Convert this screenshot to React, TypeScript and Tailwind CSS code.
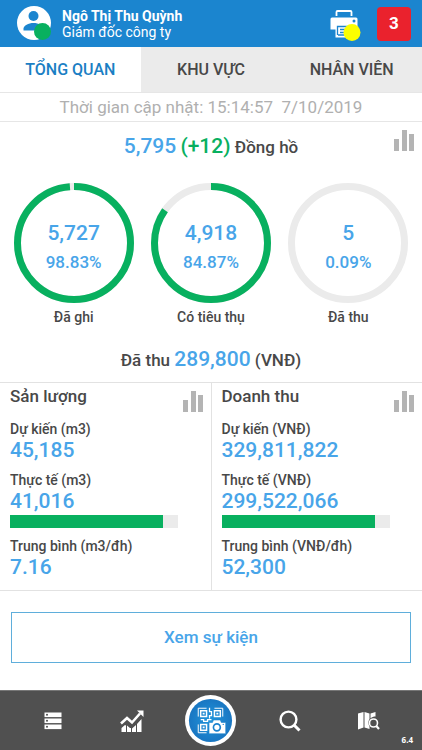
import type { ReactNode } from "react";

const rings = [
    { value: "5,727", percent: "98.83%", label: "Đã ghi", filled: 98.83 },
    { value: "4,918", percent: "84.87%", label: "Có tiêu thụ", filled: 84.87 },
    { value: "5", percent: "0.09%", label: "Đã thu", filled: 0 },
];

const panels = [
    { title: "Sản lượng", unit: "m3", planned: "45,185", actual: "41,016", average: "7.16", progress: 91 },
    { title: "Doanh thu", unit: "VNĐ", planned: "329,811,822", actual: "299,522,066", average: "52,300", progress: 91 },
];

function BarsIcon() {
    return (
        <svg width="21" height="21" viewBox="0 0 21 21" fill="#b4b4b4" aria-hidden="true">
            <rect x="0" y="9" width="5" height="12" />
            <rect x="8" y="0" width="5" height="21" />
            <rect x="15" y="4" width="5" height="17" />
        </svg>
    );
}

function ChartButton({ label }: { label: string }) {
    return (
        <button type="button" aria-label={label} className="block">
            <BarsIcon />
        </button>
    );
}

function Ring({ value, percent, label, filled }: (typeof rings)[number]) {
    return (
        <div className="flex flex-1 flex-col items-center">
            <div className="grid size-[120px] place-items-center">
                <svg viewBox="0 0 120 120" className="col-start-1 row-start-1 size-full" fill="none" strokeWidth="7" aria-hidden="true">
                    <circle cx="60" cy="60" r="56.500" stroke="#ebebeb" />
                    {filled > 0 && (
                        <circle
                            cx="60"
                            cy="60"
                            r="56.500"
                            stroke="#08b05f"
                            pathLength={100}
                            strokeDasharray={`${filled} 100`}
                            transform="rotate(-90 60 60)"
                        />
                    )}
                </svg>
                <div className="col-start-1 row-start-1 pt-2 text-center font-medium text-[#48a5e9]">
                    <div className="text-[21px] leading-7">{value}</div>
                    <div className="pt-px text-[17px] leading-7">{percent}</div>
                </div>
            </div>
            <div className="pt-1 text-sm leading-5 font-medium">{label}</div>
        </div>
    );
}

function Panel({ title, unit, planned, actual, average, progress }: (typeof panels)[number]) {
    return (
        <section className="flex-1 border-r border-[#e2e2e2] pb-3 pl-[10px] last:border-r-0">
            <div className="flex justify-between pr-[7px]">
                <h2 className="text-[17px] leading-[26px] font-medium">{title}</h2>
                <div className="pt-2">
                    <ChartButton label={`Biểu đồ ${title}`} />
                </div>
            </div>
            <dl className="pt-[7px] font-medium">
                <dt className="text-sm leading-5">Dự kiến ({unit})</dt>
                <dd className="text-[21px] leading-[22px] text-[#48a5e9]">{planned}</dd>
                <dt className="pt-[9px] text-sm leading-5">Thực tế ({unit})</dt>
                <dd className="text-[21px] leading-[22px] text-[#48a5e9]">
                    {actual}
                    <div className="mt-[3px] h-[13px] w-[84%] bg-[#ebebeb]">
                        <div className="h-full bg-[#08b05f]" style={{ width: `${progress}%` }} />
                    </div>
                </dd>
                <dt className="pt-2 text-sm leading-5">Trung bình ({unit}/đh)</dt>
                <dd className="text-[21px] leading-[22px] text-[#48a5e9]">{average}</dd>
            </dl>
        </section>
    );
}

function NavButton({ label, children }: { label: string; children: ReactNode }) {
    return (
        <button type="button" aria-label={label} className="flex flex-1 items-center justify-center">
            {children}
        </button>
    );
}

function ListIcon() {
    return (
        <svg width="18" height="18" viewBox="0 0 18 18" aria-hidden="true">
            {[0, 6, 12].map((y) => (
                <g key={y}>
                    <rect x="0.5" y={y + 0.5} width="17" height="4.600" fill="#fff" />
                    <circle cx="3" cy={y + 2.8} r="1" fill="#505050" />
                </g>
            ))}
        </svg>
    );
}

function GrowthIcon() {
    return (
        <svg width="24" height="22" viewBox="0 0 24 22" aria-hidden="true">
            <path fill="#fff" d="M1.500 18l3.500-3 1 .500V22H1.500zM7 15.500l3 2.500 1 0v4H7zM12 18.500l4-3.500v7h-4zM17 14l4.500-5v13H17z" />
            <path d="M1 13.500l6-5.500 5 4.500 8-9" fill="none" stroke="#fff" strokeWidth="2.600" />
            <path fill="#fff" d="M17 .500h6.500V7z" />
        </svg>
    );
}

function ScanIcon() {
    return (
        <svg width="51" height="51" viewBox="0 0 52 52" aria-hidden="true">
            <defs>
                <radialGradient id="scan">
                    <stop offset="0" stopColor="#2196dd" />
                    <stop offset="1" stopColor="#1976c2" />
                </radialGradient>
            </defs>
            <circle cx="26" cy="26" r="26" fill="#fff" />
            <circle cx="26" cy="26" r="22" fill="url(#scan)" />
            <g fill="none" stroke="#fff">
                <path d="M13.500 22v-8.500H22M30 13.500h8.500V22M13.500 30v8.500H22" />
                <path strokeWidth="1.500" d="M16 16h6v6h-6zM30 16h6v6h-6zM16 30h6v6h-6z" />
                <path d="M25 13v4h2v4h-2v3M16 25h3v2h4v-2h4" strokeWidth="1.300" />
            </g>
            <path fill="#fff" d="M18 18h2v2h-2zM32 18h2v2h-2zM18 32h2v2h-2z" />
            <path fill="#fff" d="M24.500 28h3.500l1-2.500h7l1 2.500h4.500v11.500h-17z" stroke="#1c82ce" strokeWidth=".600" />
            <circle cx="32.500" cy="33" r="3.500" fill="#fff" stroke="#1c82ce" strokeWidth="1.700" />
            <circle cx="39" cy="30" r=".700" fill="#1c82ce" />
        </svg>
    );
}

function SearchIcon() {
    return (
        <svg width="22" height="22" viewBox="0 0 22 22" fill="none" stroke="#fff" aria-hidden="true">
            <circle cx="9.500" cy="9.500" r="7.900" strokeWidth="2.400" />
            <path d="M15 15l5.500 5.500" strokeWidth="3" />
        </svg>
    );
}

function MapSearchIcon() {
    return (
        <svg width="22" height="20" viewBox="0 0 22 20" aria-hidden="true">
            <path fill="#fff" d="M0 2.500L5.500 1v15.500L0 18.500zM6.500 1l5 1.500v5.500c-1.500 2-1.500 5 0 7.500v2.500l-5-1.500zM12.500 2.500L17.500 1v4.500c-2 0-3.500.5-5 2z" />
            <circle cx="15.500" cy="12" r="4" fill="none" stroke="#fff" strokeWidth="1.600" />
            <path d="M18.300 15l2.700 3" stroke="#fff" strokeWidth="2.200" />
        </svg>
    );
}

function PrinterIcon() {
    return (
        <svg width="32" height="34" viewBox="0 0 32 34" aria-hidden="true">
            <path d="M6.500 9V5a1 1 0 0 1 1-1h13a1 1 0 0 1 1 1v4" fill="none" stroke="#fff" strokeWidth="1.800" />
            <path fill="#fff" d="M2 10.500h24a1.500 1.500 0 0 1 1.500 1.500v10.500H.5V12A1.500 1.500 0 0 1 2 10.500z" />
            <circle cx="24" cy="14" r="1.500" fill="#1b85cf" />
            <path fill="#fff" d="M5.500 18h17v12.500h-17z" />
            <path d="M7.500 28V19.500h13M8 28h13M10 22.500h8M10 25.500h8" stroke="#1b85cf" strokeWidth="1.300" fill="none" />
            <circle cx="22" cy="25.500" r="8.500" fill="#fbff00" />
        </svg>
    );
}

function Avatar() {
    return (
        <svg width="35" height="35" viewBox="0 0 35 35" aria-hidden="true">
            <circle cx="17" cy="17" r="17" fill="#fff" />
            <circle cx="16.500" cy="10" r="5" fill="#1b85cf" />
            <path fill="#1b85cf" d="M6.500 24.500v-2c0-3 5-5.500 10-5.500s10 2.500 10 5.500v2z" />
            <circle cx="25.500" cy="25.500" r="8.500" fill="#08b05f" />
        </svg>
    );
}

export default function App() {
    return (
        <div className="flex min-h-screen flex-col bg-white font-[Roboto,sans-serif] text-[#484848]">
            <header className="flex h-[47px] items-center bg-[#1b85cf] pr-[11px] pl-[17px] text-white">
                <Avatar />
                <div className="flex-1 pl-[10px] text-sm leading-4">
                    <div className="font-bold">Ngô Thị Thu Quỳnh</div>
                    <div>Giám đốc công ty</div>
                </div>
                <button type="button" aria-label="Máy in">
                    <PrinterIcon />
                </button>
                <button type="button" className="ml-[15px] size-[34px] rounded bg-[#ea222d] text-[17px] font-bold">
                    3
                </button>
            </header>

            <nav className="grid h-[45px] grid-cols-3 bg-[#ebebeb] text-base font-medium">
                <button type="button" className="bg-white text-[#1b7fc4]">TỔNG QUAN</button>
                <button type="button">KHU VỰC</button>
                <button type="button">NHÂN VIÊN</button>
            </nav>

            <p className="border-y border-[#e6e6e6] text-center text-[17px] leading-7 whitespace-pre text-[#b0b0b0]">
                Thời gian cập nhật: 15:14:57  7/10/2019
            </p>

            <main>
                <div className="grid grid-cols-[1fr_auto_1fr] px-[7px] pt-2">
                    <p className="col-start-2 pt-px text-[17px] leading-[30px] font-medium">
                        <span className="text-[21px] text-[#48a5e9]">5,795</span>{" "}
                        <span className="text-[21px] text-[#08b05f]">(+12)</span> Đồng hồ
                    </p>
                    <div className="justify-self-end">
                        <ChartButton label="Biểu đồ đồng hồ" />
                    </div>
                </div>

                <div className="flex px-[5px] pt-[21px]">
                    {rings.map((ring) => (
                        <Ring key={ring.label} {...ring} />
                    ))}
                </div>

                <p className="pt-[17px] pb-[7px] text-center text-[17px] leading-[30px] font-medium">
                    Đã thu <span className="text-[21px] text-[#48a5e9]">289,800</span> (VNĐ)
                </p>

                <div className="flex border-y border-[#e2e2e2]">
                    {panels.map((panel) => (
                        <Panel key={panel.title} {...panel} />
                    ))}
                </div>

                <div className="px-[11px] py-[21px]">
                    <button type="button" className="h-[51px] w-full border border-[#5faedb] text-[17px] font-medium text-[#48a5e9]">
                        Xem sự kiện
                    </button>
                </div>
            </main>

            <footer className="relative mt-auto flex h-[60px] border-t border-[#777777] bg-[#505050] px-[14px] text-white">
                <NavButton label="Danh sách"><ListIcon /></NavButton>
                <NavButton label="Thống kê"><GrowthIcon /></NavButton>
                <NavButton label="Quét mã"><ScanIcon /></NavButton>
                <NavButton label="Tìm kiếm"><SearchIcon /></NavButton>
                <NavButton label="Bản đồ"><MapSearchIcon /></NavButton>
                <span className="absolute right-[9px] bottom-1 font-['Noto_Sans',sans-serif] text-[8px] leading-3 font-bold">6.4</span>
            </footer>
        </div>
    );
}
